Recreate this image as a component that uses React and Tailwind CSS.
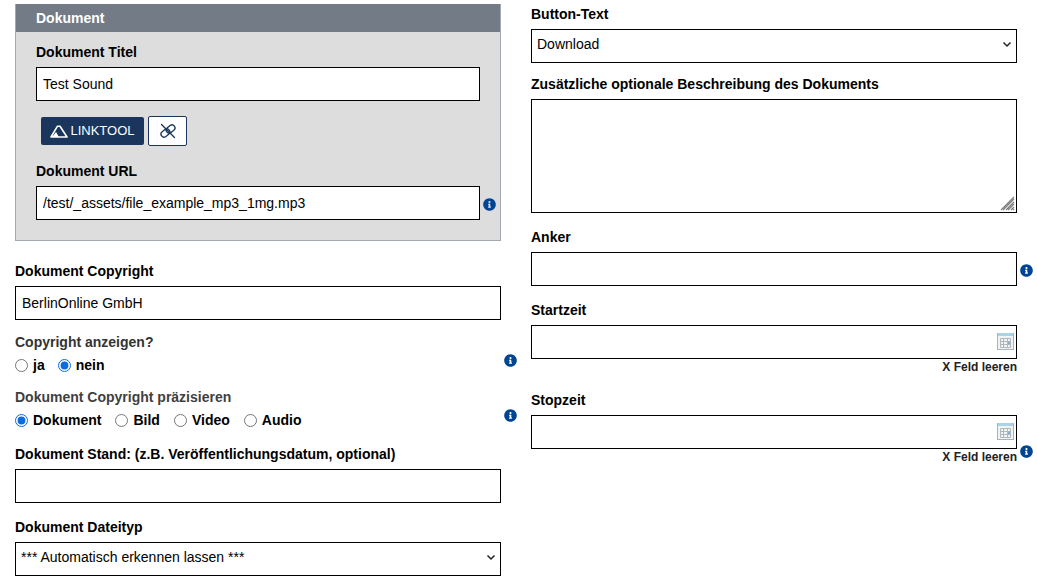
import React from "react";
import { FaInfoCircle } from "react-icons/fa";

function Label({ children, className = "text-black" }) {
  return <div className={"font-bold text-[14px] leading-[20px] " + className}>{children}</div>;
}

function TextInput({ value }) {
  return (
    <input
      type="text"
      defaultValue={value}
      className="block w-full h-[34px] border border-black bg-white px-[6px] text-[14px] text-black outline-none"
    />
  );
}

function Select({ value }) {
  return (
    <div className="relative">
      <select
        defaultValue={value}
        className="block w-full h-[34px] appearance-none border border-black bg-white px-[5px] pb-[4px] text-[14px] text-black outline-none"
      >
        <option>{value}</option>
      </select>
      <svg className="absolute right-[5px] top-[12px] pointer-events-none" width="10" height="8" viewBox="0 0 10 8" fill="none">
        <path d="M1.5 1.5 L5 5 L8.5 1.5" stroke="#222" strokeWidth="1.5" />
      </svg>
    </div>
  );
}

function Info({ className = "" }) {
  return <FaInfoCircle size={13} className={"absolute text-[#004494] " + className} />;
}

function Radio({ name, label, checked }) {
  return (
    <label className="flex items-center font-bold text-[14px] leading-[20px] text-black">
      <input type="radio" name={name} defaultChecked={checked} className="w-[13px] h-[13px] m-0 mr-[5px] accent-[#0a6ce0]" />
      {label}
    </label>
  );
}

function CalendarIcon() {
  return (
    <svg className="absolute right-[3px] top-[8px]" width="17" height="17" viewBox="0 0 17 17">
      <rect x="0.5" y="0.5" width="16" height="16" fill="#f1f4f5" stroke="#a9b2b8" />
      <rect x="1" y="0" width="15" height="3" fill="#a8d4e6" />
      <path d="M3.5 5.5h10v9h-10z M6.5 5.5v9 M10.5 5.5v9 M3.5 8.5h10 M3.5 11.5h10" fill="none" stroke="#b0b8bd" />
      <rect x="11" y="9" width="2" height="2" fill="#7fb4cc" />
    </svg>
  );
}

function DateField({ label, info }) {
  return (
    <div>
      <Label>{label}</Label>
      <div className="relative mt-[5px]">
        <input type="text" className="block w-full h-[34px] border border-black bg-white outline-none" />
        <CalendarIcon />
        {info && <Info className="right-[-16px] top-[30px]" />}
      </div>
      <div className="text-right font-bold text-[12px] leading-[16px] text-[#222]">X Feld leeren</div>
    </div>
  );
}

export default function App() {
  return (
    <div className="w-[1037px] h-[581px] overflow-hidden bg-white font-['Liberation_Sans',Arial,sans-serif]">
      <div className="grid grid-cols-[486px_486px] gap-x-[30px] pl-[15px]">
        {/* Left column */}
        <div className="pt-[4px]">
          <div className="h-[237px] border border-t-0 border-[#a3a9b1] bg-[#dddddd]">
            <div className="h-[28px] bg-[#737b87] pl-[20px] font-bold text-[14px] leading-[28px] text-white">Dokument</div>
            <div className="pl-[20px] pr-[20px] pt-[10px]">
              <Label>Dokument Titel</Label>
              <div className="mt-[5px]"><TextInput value="Test Sound" /></div>
              <div className="flex items-center gap-[4px] mt-[15px] ml-[5px]">
                <button className="flex items-center justify-center w-[103px] h-[28px] rounded-[2px] bg-[#1a365d] text-white text-[13px]">
                  <svg width="18" height="13" viewBox="0 0 18 13" className="mr-[2px]">
                    <path d="M1 12 L7.5 1.2 L10 1.2 L17 12 Z" fill="none" stroke="#fff" strokeWidth="1.6" strokeLinejoin="round" />
                    <path d="M2 12 L6 7 L9 12 Z" fill="#fff" />
                  </svg>
                  LINKTOOL
                </button>
                <button className="flex items-center justify-center w-[39px] h-[30px] rounded-[2px] border border-[#1a365d] bg-white">
                  <svg width="18" height="16" viewBox="0 0 18 16" fill="none" stroke="#1a365d" strokeWidth="1.4" strokeLinecap="round">
                    <g transform="rotate(-38 9 8)">
                      <rect x="1" y="5" width="9.5" height="6" rx="3" />
                      <rect x="7.5" y="5" width="9.5" height="6" rx="3" />
                    </g>
                    <path d="M2.5 1.5 L15.5 14.5" />
                  </svg>
                </button>
              </div>
              <div className="mt-[15px]"><Label>Dokument URL</Label></div>
              <div className="relative mt-[5px]">
                <TextInput value="/test/_assets/file_example_mp3_1mg.mp3" />
                <Info className="right-[-16px] top-[12px]" />
              </div>
            </div>
          </div>

          <div className="mt-[20px]">
            <Label>Dokument Copyright</Label>
            <div className="mt-[5px]"><TextInput value="BerlinOnline GmbH" /></div>
          </div>

          <div className="relative mt-[12px]">
            <Label className="text-[#333333]">Copyright anzeigen?</Label>
            <div className="flex gap-[13px] mt-[3px]">
              <Radio name="show" label="ja" />
              <Radio name="show" label="nein" checked />
            </div>
            <Info className="right-[-16px] top-[22px]" />
          </div>

          <div className="relative mt-[12px]">
            <Label className="text-[#3f3f3f]">Dokument Copyright präzisieren</Label>
            <div className="flex gap-[14px] mt-[3px]">
              <Radio name="kind" label="Dokument" checked />
              <Radio name="kind" label="Bild" />
              <Radio name="kind" label="Video" />
              <Radio name="kind" label="Audio" />
            </div>
            <Info className="right-[-16px] top-[22px]" />
          </div>

          <div className="mt-[14px]">
            <Label>Dokument Stand: (z.B. Veröffentlichungsdatum, optional)</Label>
            <div className="mt-[5px]"><TextInput value="" /></div>
          </div>

          <div className="mt-[14px]">
            <Label>Dokument Dateityp</Label>
            <div className="mt-[5px]"><Select value="*** Automatisch erkennen lassen ***" /></div>
          </div>
        </div>

        {/* Right column */}
        <div className="pt-[4px]">
          <Label>Button-Text</Label>
          <div className="mt-[5px]"><Select value="Download" /></div>

          <div className="mt-[11px]">
            <Label>Zusätzliche optionale Beschreibung des Dokuments</Label>
            <div className="relative mt-[5px]">
              <textarea className="block w-full h-[114px] resize-none border border-black bg-white outline-none" />
              <svg className="absolute right-[2px] bottom-[2px] pointer-events-none" width="15" height="15" viewBox="0 0 15 15" stroke="#808080" strokeWidth="1.2">
                <path d="M1 14 L14 1 M3 14 L14 3 M6 14 L14 6 M8 14 L14 8 M11 14 L14 11 M13 14 L14 13" />
              </svg>
            </div>
          </div>

          <div className="mt-[14px]">
            <Label>Anker</Label>
            <div className="relative mt-[5px]">
              <TextInput value="" />
              <Info className="right-[-16px] top-[12px]" />
            </div>
          </div>

          <div className="mt-[14px]"><DateField label="Startzeit" /></div>
          <div className="mt-[15px]"><DateField label="Stopzeit" info /></div>
        </div>
      </div>
    </div>
  );
}
